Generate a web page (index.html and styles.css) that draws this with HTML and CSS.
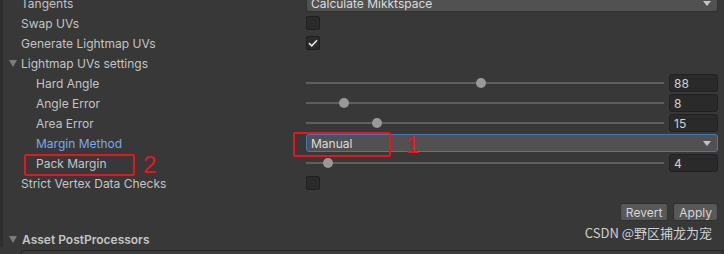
FILE: index.html
```html
<!DOCTYPE html>
<html lang="en">
<head>
    <meta charset="UTF-8">
    <title>Model Import Settings</title>
    <link rel="stylesheet" href="styles.css">
</head>
<body>
    <div class="inspector">
        <div class="rows">
            <div class="row">
                <div class="label">Tangents</div>
                <div class="control">
                    <div class="dropdown"><span>Calculate Mikktspace</span><span class="arrow"></span></div>
                </div>
            </div>
            <div class="row">
                <div class="label">Swap UVs</div>
                <div class="control"><span class="checkbox"></span></div>
            </div>
            <div class="row">
                <div class="label">Generate Lightmap UVs</div>
                <div class="control">
                    <span class="checkbox">
                        <svg width="10" height="8" viewBox="0 0 10 8"><path d="M1 4.2 L3.8 6.8 L9 1.2" fill="none" stroke="#e6e6e6" stroke-width="1.6"/></svg>
                    </span>
                </div>
            </div>
            <div class="row">
                <div class="label foldout"><span class="tri"></span>Lightmap UVs settings</div>
            </div>
            <div class="row">
                <div class="label sub">Hard Angle</div>
                <div class="control slider">
                    <div class="track"><span class="thumb" style="left: 175px"></span></div>
                    <div class="field">88</div>
                </div>
            </div>
            <div class="row">
                <div class="label sub">Angle Error</div>
                <div class="control slider">
                    <div class="track"><span class="thumb" style="left: 38px"></span></div>
                    <div class="field">8</div>
                </div>
            </div>
            <div class="row">
                <div class="label sub">Area Error</div>
                <div class="control slider">
                    <div class="track"><span class="thumb" style="left: 71px"></span></div>
                    <div class="field">15</div>
                </div>
            </div>
            <div class="row">
                <div class="label sub focused">Margin Method</div>
                <div class="control">
                    <div class="dropdown active"><span>Manual</span><span class="arrow"></span></div>
                    <span class="mark mark-box box-1"></span>
                    <span class="mark mark-num num-1">1</span>
                </div>
            </div>
            <div class="row">
                <div class="label sub">Pack Margin</div>
                <div class="control slider">
                    <div class="track"><span class="thumb" style="left: 22px"></span></div>
                    <div class="field">4</div>
                </div>
                <span class="mark mark-box box-2"></span>
                <span class="mark mark-num num-2">2</span>
            </div>
            <div class="row">
                <div class="label">Strict Vertex Data Checks</div>
                <div class="control"><span class="checkbox"></span></div>
            </div>
        </div>

        <div class="buttons">
            <button class="btn">Revert</button>
            <button class="btn">Apply</button>
        </div>

        <div class="section">
            <div class="section-title"><span class="tri"></span>Asset PostProcessors</div>
            <div class="section-body"></div>
        </div>

        <div class="watermark">CSDN @野区捕龙为宠</div>
    </div>
</body>
</html>
```

FILE: styles.css
```css
* {
    margin: 0;
    padding: 0;
    box-sizing: border-box;
}

body {
    font-family: Inter, 'Noto Sans', sans-serif;
    font-size: 12px;
    color: #c4c4c4;
    background: #383838;
    width: 724px;
    height: 254px;
    overflow: hidden;
}

.inspector {
    position: relative;
    height: 254px;
    border-left: 3px solid #2e2e2e;
}

.rows {
    margin-top: -7px;
}

.row {
    position: relative;
    display: flex;
    align-items: center;
    height: 20px;
}

.label {
    width: 303px;
    padding-left: 18px;
    white-space: nowrap;
}

.label.sub {
    padding-left: 33px;
}

.label.focused {
    color: #7ba9ec;
}

.foldout {
    position: relative;
}

.tri {
    position: absolute;
    left: 6px;
    top: 4px;
    width: 0;
    height: 0;
    border-left: 4px solid transparent;
    border-right: 4px solid transparent;
    border-top: 7px solid #7c7c7c;
}

.control {
    position: relative;
    flex: 1;
    display: flex;
    align-items: center;
    padding-right: 6px;
}

.dropdown {
    flex: 1;
    height: 18px;
    display: flex;
    align-items: center;
    justify-content: space-between;
    padding: 0 6px 0 4px;
    background: #515151;
    border: 1px solid #303030;
    border-radius: 3px;
    color: #dcdcdc;
}

.dropdown.active {
    border-color: #3a79c9;
}

.arrow {
    width: 0;
    height: 0;
    border-left: 4px solid transparent;
    border-right: 4px solid transparent;
    border-top: 5px solid #c4c4c4;
}

.checkbox {
    width: 14px;
    height: 14px;
    display: flex;
    align-items: center;
    justify-content: center;
    background: #2a2a2a;
    border: 1px solid #1f1f1f;
    border-radius: 2px;
}

.slider {
    gap: 5px;
}

.track {
    position: relative;
    flex: 1;
    height: 2px;
    background: #5e5e5e;
}

.thumb {
    position: absolute;
    top: -4px;
    width: 10px;
    height: 10px;
    margin-left: -5px;
    border-radius: 50%;
    background: #999999;
}

.field {
    width: 49px;
    height: 18px;
    padding: 1px 4px 0;
    background: #2a2a2a;
    border: 1px solid #212121;
    border-radius: 3px;
    color: #d2d2d2;
    line-height: 15px;
}

.mark-box {
    position: absolute;
    border: 2px solid #e8161b;
    border-radius: 2px;
}

.box-1 {
    left: -13px;
    top: -2px;
    width: 98px;
    height: 25px;
}

.box-2 {
    left: 21px;
    top: 1px;
    width: 111px;
    height: 22px;
}

.mark-num {
    position: absolute;
    color: #e8161b;
    font-family: 'Liberation Sans', sans-serif;
    font-size: 24px;
    line-height: 22px;
}

.num-1 {
    left: 100px;
    top: 0;
}

.num-2 {
    left: 140px;
    top: 1px;
}

.buttons {
    display: flex;
    justify-content: flex-end;
    gap: 5px;
    padding-right: 6px;
    margin-top: 10px;
}

.btn {
    height: 18px;
    padding: 0 5px;
    font-family: Inter, 'Noto Sans', sans-serif;
    font-size: 12px;
    color: #d6d6d6;
    background: #585858;
    border: 1px solid #303030;
    border-radius: 3px;
}

.section {
    margin-top: 12px;
}

.section-title {
    position: relative;
    height: 14px;
    padding-left: 19px;
    font-weight: 600;
    line-height: 14px;
}

.section-title .tri {
    top: 3px;
}

.section-body {
    margin: 3px 0 0 18px;
    height: 4px;
    border: 1px solid #262626;
    border-bottom: none;
    border-radius: 3px 3px 0 0;
    background: #3b3b3b;
}

.watermark {
    position: absolute;
    right: 12px;
    bottom: 5px;
    font-family: 'Noto Sans CJK SC', sans-serif;
    font-size: 13px;
    color: #d0d0d0;
}
```
